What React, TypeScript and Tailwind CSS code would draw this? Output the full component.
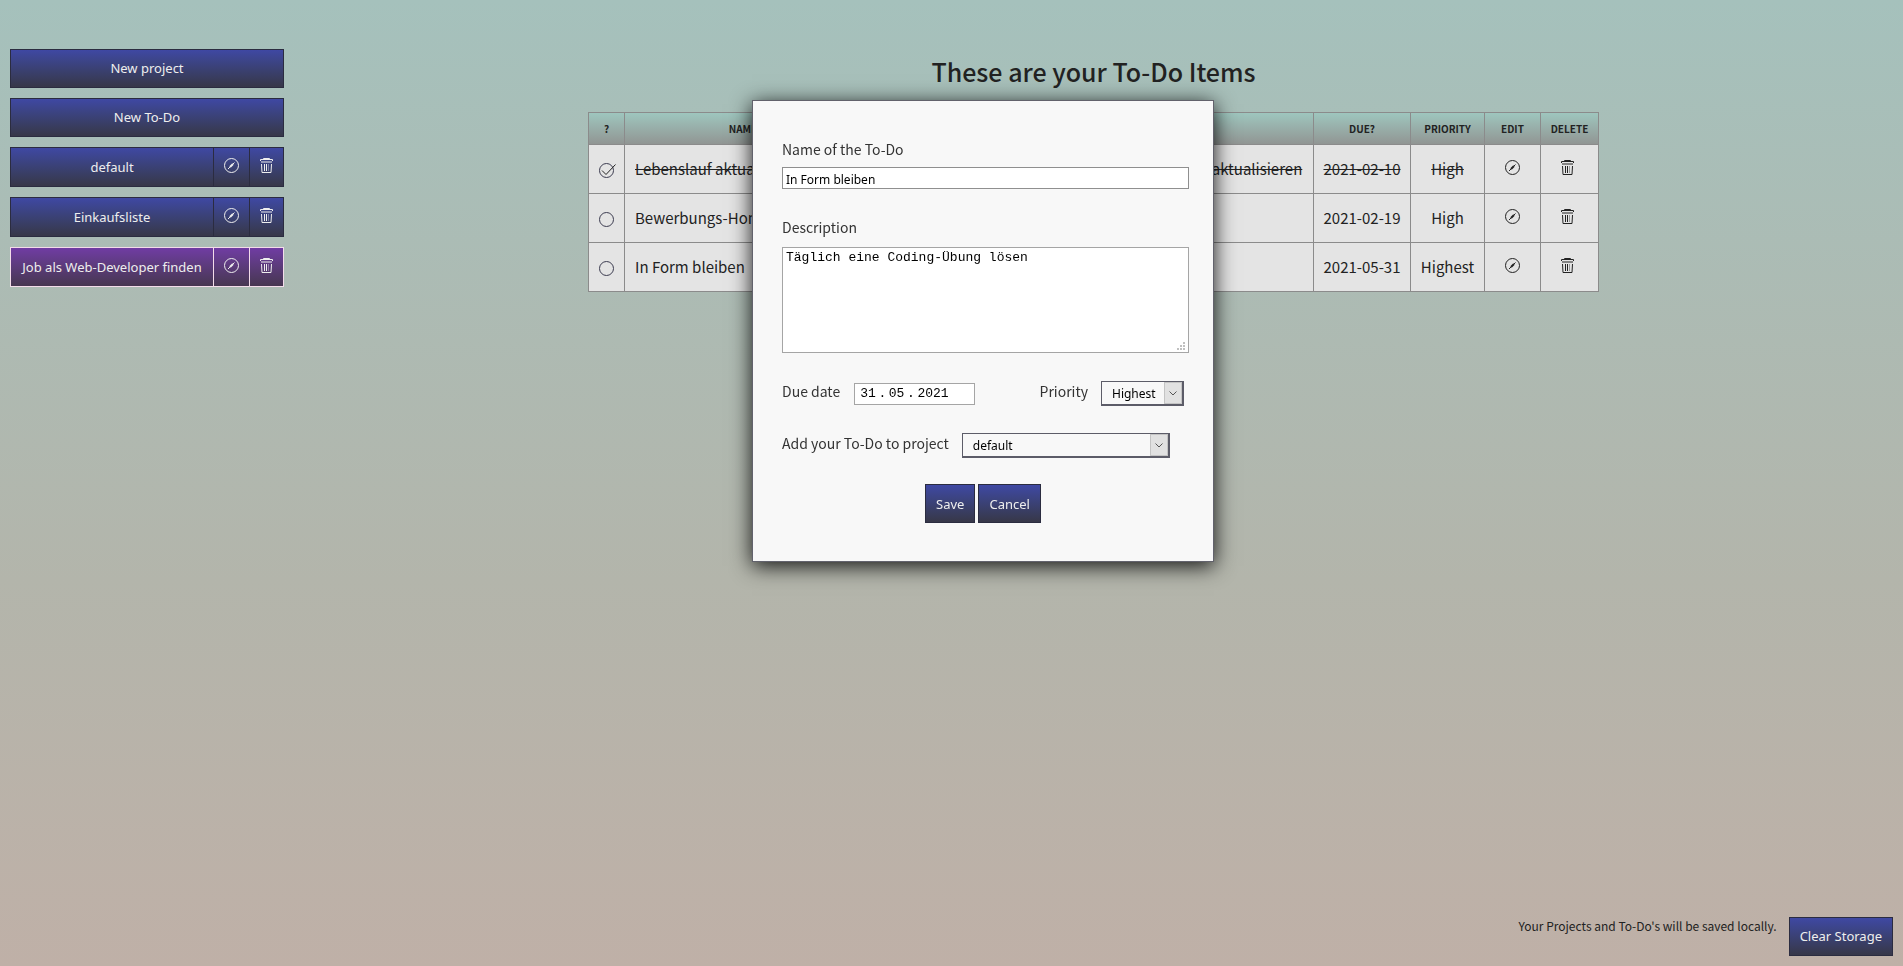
import { useState } from 'react'
import type { ReactNode } from 'react'
import clsx from 'clsx'

const PROJECTS = ['default', 'Einkaufsliste', 'Job als Web-Developer finden']

const PRIORITIES = ['Low', 'Medium', 'High', 'Highest']

const TODOS = [
  {
    name: 'Lebenslauf aktualisieren',
    description: 'Anschreiben, Lebenslauf sowie weiteren Anhang aktualisieren',
    due: '2021-02-10',
    priority: 'High',
    done: true,
  },
  {
    name: 'Bewerbungs-Homepage',
    description: 'Texte und Bilder sammeln',
    due: '2021-02-19',
    priority: 'High',
    done: false,
  },
  {
    name: 'In Form bleiben',
    description: 'Täglich eine Coding-Übung lösen',
    due: '2021-05-31',
    priority: 'Highest',
    done: false,
  },
]

const BLUE = 'border-[#2b2c40] bg-linear-to-b from-[#3f48a3] to-[#373748]'
const PURPLE = 'border-[#f3dcea] bg-linear-to-b from-[#703ca3] to-[#473651]'

function EditIcon() {
  return (
    <svg width="15" height="15" viewBox="0 0 15 15" fill="none" stroke="currentColor">
      <circle cx="7.5" cy="7.5" r="7" />
      <path d="M6 9 9 6" strokeWidth="2" />
      <path d="M4 11 6 9M9 6 10.5 4.5" />
    </svg>
  )
}

function TrashIcon() {
  return (
    <svg width="13" height="15" viewBox="0 0 13 15" fill="none" stroke="currentColor">
      <path d="M3.5 1.5V.5h6v1M.5 3V1.5h12V3" />
      <path d="M1 4h11" strokeWidth="2" strokeOpacity="0.5" />
      <path d="M1.5 6 2 14.5h9L11.5 6" />
      <path d="M4.5 6v7M6.5 6v7" />
      <path d="M8.5 6v7" strokeOpacity="0.4" />
    </svg>
  )
}

function StatusIcon({ done }: { done: boolean }) {
  return (
    <svg width="19" height="16" viewBox="0 0 19 16" fill="none" stroke="#3c3c50">
      <circle cx="9.5" cy="8.5" r="7" />
      {done && <path d="M5 8.5 9 12.5 18.5 2.5" stroke="#222" />}
    </svg>
  )
}

function Button({ children, wide }: { children: ReactNode; wide?: boolean }) {
  return (
    <button
      type="button"
      className={clsx('h-[39px] border px-2.5 font-["Noto_Sans",sans-serif] text-[13px] text-[#eee]', BLUE, wide && 'w-full')}
    >
      {children}
    </button>
  )
}

function Sidebar() {
  return (
    <nav className="flex w-[274px] shrink-0 flex-col gap-2.5">
      <Button wide>New project</Button>
      <Button wide>New To-Do</Button>
      {PROJECTS.map((p, i) => {
        const tone = i === 2 ? PURPLE : BLUE
        return (
          <div key={p} className='flex h-10 font-["Noto_Sans",sans-serif] text-[13px] text-[#eee]'>
            <button type="button" className={clsx('grow border border-r-0 pt-0.5 whitespace-nowrap', tone)}>
              {p}
            </button>
            <button
              type="button"
              aria-label={`Edit ${p}`}
              className={clsx('flex w-9 justify-center border border-r-0 pt-2.5', tone)}
            >
              <EditIcon />
            </button>
            <button
              type="button"
              aria-label={`Delete ${p}`}
              className={clsx('flex w-[35px] justify-center border pt-2.5', tone)}
            >
              <TrashIcon />
            </button>
          </div>
        )
      })}
    </nav>
  )
}

function TodoTable() {
  return (
    <table className="w-[1011px] table-fixed border-collapse text-[15px] text-[#222]">
      <colgroup>
        <col className="w-9" />
        <col className="w-[237px]" />
        <col />
        <col className="w-[97px]" />
        <col className="w-[74px]" />
        <col className="w-14" />
        <col className="w-[58px]" />
      </colgroup>
      <thead>
        <tr className="h-8 bg-linear-to-b from-[#9ec6be] to-[#909492] text-[10px] uppercase">
          {['?', 'Name', 'Description', 'Due?', 'Priority', 'Edit', 'Delete'].map((h) => (
            <th key={h} className="border border-[#8b8b8b] font-bold">
              {h}
            </th>
          ))}
        </tr>
      </thead>
      <tbody>
        {TODOS.map((t) => (
          <tr
            key={t.name}
            className={clsx(
              'h-[49px] bg-[#e4e4e4] text-center whitespace-nowrap *:border *:border-[#8b8b8b]',
              t.done && 'line-through',
            )}
          >
            <td>
              <button type="button" aria-label="Toggle done" className="flex w-full justify-center pt-0.5">
                <StatusIcon done={t.done} />
              </button>
            </td>
            <td className="pl-2.5 text-left">{t.name}</td>
            <td className="pl-2.5 text-left">{t.description}</td>
            <td>{t.due}</td>
            <td>{t.priority}</td>
            <td>
              <button type="button" aria-label={`Edit ${t.name}`} className="flex w-full justify-center pb-1">
                <EditIcon />
              </button>
            </td>
            <td>
              <button type="button" aria-label={`Delete ${t.name}`} className="flex w-full justify-center pr-1 pb-1">
                <TrashIcon />
              </button>
            </td>
          </tr>
        ))}
      </tbody>
    </table>
  )
}

function Select({
  id,
  options,
  value,
  onChange,
  className,
}: {
  id: string
  options: string[]
  value: string
  onChange: (value: string) => void
  className: string
}) {
  return (
    <div className={clsx('relative h-[25px]', className)}>
      <select
        id={id}
        value={value}
        onChange={(e) => onChange(e.target.value)}
        className='h-full w-full appearance-none border border-r-2 border-b-2 border-[#5c5c68] bg-[#f8f8f8] pt-0.5 pl-2.5 font-["Noto_Sans",sans-serif] text-xs text-black'
      >
        {options.map((o) => (
          <option key={o}>{o}</option>
        ))}
      </select>
      <span className="pointer-events-none absolute top-px right-0.5 bottom-0.5 flex w-[18px] items-center justify-center border border-[#c4c4c4] bg-[#e1e1e1]">
        <svg width="8" height="5" viewBox="0 0 8 5" fill="none" stroke="#555">
          <path d="M.5.5 4 4 7.5.5" />
        </svg>
      </span>
    </div>
  )
}

function ResizeGrip() {
  return (
    <span className="pointer-events-none absolute right-px bottom-px bg-white pt-1 pr-0.5 pb-px pl-1">
      <svg width="9" height="9" viewBox="0 0 9 9" fill="#c0c0c0">
        <path d="M6 0h2v2H6zM3 3h2v2H3zM6 3h2v2H6zM0 6h2v2H0zM3 6h2v2H3zM6 6h2v2H6z" />
      </svg>
    </span>
  )
}

function TodoDialog() {
  const [name, setName] = useState('In Form bleiben')
  const [description, setDescription] = useState('Täglich eine Coding-Übung lösen')
  const [due, setDue] = useState('31\u2009.\u200905\u2009.\u20092021')
  const [priority, setPriority] = useState('Highest')
  const [project, setProject] = useState('default')

  return (
    <div className="fixed inset-0 flex items-start justify-center pt-25 pl-[63px]">
      <form
        role="dialog"
        aria-label="Edit To-Do"
        className="flex w-[462px] flex-col border border-[#62626c] bg-[#f8f8f8] pt-[38px] pr-6 pb-[38px] pl-[29px] text-sm leading-5 text-[#333] shadow-[0_4px_20px_rgba(0,0,0,0.9)]"
      >
        <label htmlFor="name">Name of the To-Do</label>
        <input
          id="name"
          value={name}
          onChange={(e) => setName(e.target.value)}
          className='mt-2 h-[22px] border border-[#8f8f8f] bg-white px-[3px] pt-0.5 font-["Noto_Sans",sans-serif] text-xs text-black'
        />
        <label htmlFor="description" className="mt-7">
          Description
        </label>
        <div className="relative mt-2.5 flex h-[106px]">
          <textarea
            id="description"
            value={description}
            onChange={(e) => setDescription(e.target.value)}
            className='w-full border border-[#a5a5a5] bg-white px-[3px] font-["Liberation_Mono",monospace] text-[13px] text-black'
          />
          <ResizeGrip />
        </div>
        <div className="mt-7 flex items-start">
          <label htmlFor="due">Due date</label>
          <input
            id="due"
            value={due}
            onChange={(e) => setDue(e.target.value)}
            className='ml-3.5 h-[22px] w-[121px] self-center border border-[#a5a5a5] bg-white px-[5px] font-["Liberation_Mono",monospace] text-[13px] text-black'
          />
          <label htmlFor="priority" className="mr-[13px] ml-auto">
            Priority
          </label>
          <Select id="priority" options={PRIORITIES} value={priority} onChange={setPriority} className="mr-[5px] w-[83px]" />
        </div>
        <div className="mt-[27px] flex items-start">
          <label htmlFor="project" className="mr-[13px]">
            Add your To-Do to project
          </label>
          <Select id="project" options={PROJECTS} value={project} onChange={setProject} className="w-[208px]" />
        </div>
        <div className="mt-[26px] flex justify-center gap-[3px] pr-[5px]">
          <Button>Save</Button>
          <Button>Cancel</Button>
        </div>
      </form>
    </div>
  )
}

export default function App() {
  return (
    <div className='flex min-h-screen flex-col bg-linear-to-b from-[#a5c1bc] via-[#b3b5ab] via-60% to-[#bfb0a7] font-["Noto_Sans_CJK_JP",sans-serif] text-[#222]'>
      <div className="flex grow pt-[49px] pl-2.5">
        <Sidebar />
        <main className="flex grow flex-col items-center">
          <h1 className="mt-1 mb-[23px] text-[25px] leading-9 font-medium">These are your To-Do Items</h1>
          <TodoTable />
        </main>
      </div>
      <footer className="flex items-start justify-end gap-3 pr-2.5 pb-2.5">
        <p className="text-xs leading-[18px]">Your Projects and To-Do's will be saved locally.</p>
        <Button>Clear Storage</Button>
      </footer>
      <TodoDialog />
    </div>
  )
}
